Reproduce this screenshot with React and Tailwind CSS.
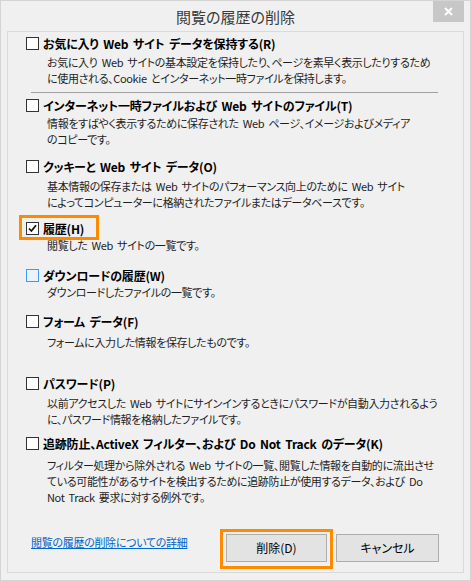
import React from 'react'

const font = { fontFamily: '"Noto Sans CJK JP", "Noto Sans", sans-serif', fontFeatureSettings: '"palt"' }

function Box({ checked, hover }) {
  return (
    <span
      className={
        'flex h-[13px] w-[13px] shrink-0 items-center justify-center border ' +
        (hover ? 'border-[#3c9bf4] bg-[#eaf3fc]' : 'border-[#333333] bg-white')
      }
    >
      {checked && (
        <svg width="9" height="9" viewBox="0 0 9 9">
          <path d="M1 4.5 L3.4 7 L8 1.2" fill="none" stroke="#111" strokeWidth="1.8" />
        </svg>
      )}
    </span>
  )
}

function Item({ label, lines, checked, hover, top, gap, mark }) {
  return (
    <div className={top}>
      <div className="relative flex h-[13px] items-center">
        {mark && (
          <span className="pointer-events-none absolute -left-[7px] -top-[7px] h-[25px] w-[80px] border-[3px] border-[#ff8a00]" />
        )}
        <Box checked={checked} hover={hover} />
        <span className="ml-[4px] text-[12px] font-bold leading-none tracking-[-0.2px] [word-spacing:2px] text-black">{label}</span>
      </div>
      <div className={'pl-[21px] text-[11px] leading-[16px] tracking-[-0.35px] [word-spacing:2px] text-[#1e1e1e] ' + gap}>
        {lines.map((l, i) => (
          <div key={i} className="whitespace-nowrap">{l}</div>
        ))}
      </div>
    </div>
  )
}

export default function App() {
  return (
    <div className="relative h-[581px] w-[471px] overflow-hidden border border-[#d4d4d4] bg-[#f0f0f0]" style={font}>
      {/* title bar */}
      <div className="relative flex h-[30px] items-center justify-center">
        <span className="text-[15px] leading-none text-[#3a3a3a]">閲覧の履歴の削除</span>
        <div className="absolute right-[6px] top-0 flex h-[21px] w-[31px] items-center justify-center bg-[#c7c7c7]">
          <svg width="9" height="9" viewBox="0 0 9 9">
            <path d="M1 1 L8 8 M8 1 L1 8" stroke="#fff" strokeWidth="2" />
          </svg>
        </div>
      </div>

      {/* panel */}
      <div className="mx-[6px] flex h-[542px] flex-col border border-[#dadada] pl-[18px] pr-[24px]">
        <Item
          top="pt-[5px]"
          gap="mt-[4px]"
          label="お気に入り Web サイト データを保持する(R)"
          lines={[
            'お気に入り Web サイトの基本設定を保持したり、ページを素早く表示したりするため',
            'に使用される、Cookie とインターネット一時ファイルを保持します。',
          ]}
        />
        <div className="ml-[5px] mt-[6px] h-px w-[407px] bg-[#a0a0a0]" />
        <Item
          top="pt-[6px]"
          gap="mt-[3px]"
          label="インターネット一時ファイルおよび Web サイトのファイル(T)"
          lines={['情報をすばやく表示するために保存された Web ページ、イメージおよびメディア', 'のコピーです。']}
        />
        <Item
          top="pt-[13px]"
          gap="mt-[5px]"
          label="クッキーと Web サイト データ(O)"
          lines={[
            '基本情報の保存または Web サイトのパフォーマンス向上のために Web サイト',
            'によってコンピューターに格納されたファイルまたはデータベースです。',
          ]}
        />
        <Item top="pt-[12px]" gap="mt-[2px]" checked mark label="履歴(H)" lines={['閲覧した Web サイトの一覧です。']} />
        <Item top="pt-[16px]" gap="mt-[2px]" hover label="ダウンロードの履歴(W)" lines={['ダウンロードしたファイルの一覧です。']} />
        <Item top="pt-[15px]" gap="mt-[6px]" label="フォーム データ(F)" lines={['フォームに入力した情報を保存したものです。']} />
        <Item
          top="pt-[27px]"
          gap="mt-[5px]"
          label="パスワード(P)"
          lines={[
            '以前アクセスした Web サイトにサインインするときにパスワードが自動入力されるよう',
            'に、パスワード情報を格納したファイルです。',
          ]}
        />
        <Item
          top="pt-[10px]"
          gap="mt-[7px]"
          label="追跡防止、ActiveX フィルター、および Do Not Track のデータ(K)"
          lines={[
            'フィルター処理から除外される Web サイトの一覧、閲覧した情報を自動的に流出させ',
            'ている可能性があるサイトを検出するために追跡防止が使用するデータ、および Do',
            'Not Track 要求に対する例外です。',
          ]}
        />

        {/* footer */}
        <div className="mt-auto mb-[10px] flex items-center">
          <a className="ml-[5px] -mt-[12px] text-[11px] leading-none tracking-[-0.3px] text-[#0066cc] underline">閲覧の履歴の削除についての詳細</a>
          <div className="ml-auto flex gap-[9px]">
            <div className="relative">
              <span className="pointer-events-none absolute -left-[6px] -top-[5px] -right-[6px] -bottom-[7px] border-[3px] border-[#ff8a00]" />
              <button className="flex h-[28px] w-[101px] items-center justify-center border border-[#adadad] bg-[#e3e3e3] text-[12px] text-black">
                削除(D)
              </button>
            </div>
            <button className="flex h-[28px] w-[103px] items-center justify-center border border-[#adadad] bg-[#e3e3e3] text-[12px] text-black">
              キャンセル
            </button>
          </div>
        </div>
      </div>
    </div>
  )
}
